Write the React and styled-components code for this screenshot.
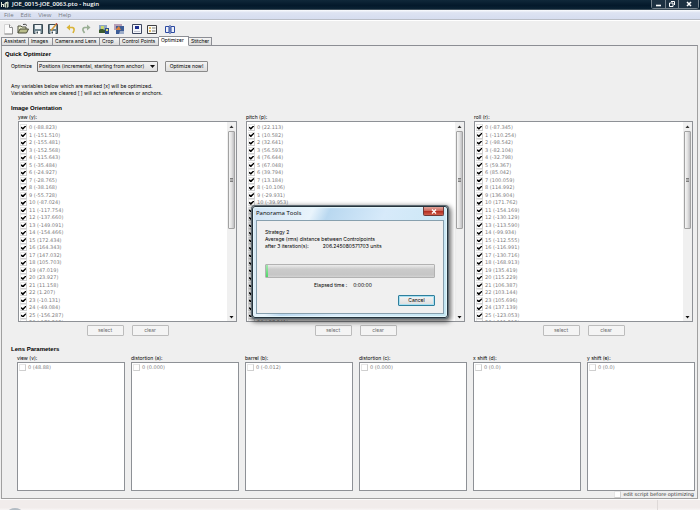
import React from 'react';

import styled, { createGlobalStyle, css } from 'styled-components';

const GlobalStyle = createGlobalStyle`
    * {
        box-sizing: border-box;
    }
    body {
        margin: 0;
        background: #efefef;
        color: #000;
        font-family: Inter, Tahoma, sans-serif;
        font-size: 5px;
        line-height: 7px;
    }
    button, input, select {
        font: inherit;
        color: inherit;
        margin: 0;
    }
    h1, h2, p {
        margin: 0;
        font-size: inherit;
    }
`;

const WindowStyle = styled.div`
    display: flex;
    flex-direction: column;
    min-height: 100vh;
`;

const TitleBar = styled.header`
    display: flex;
    align-items: center;
    gap: 3px;
    height: 10px;
    padding-left: 1px;
    background: linear-gradient(#10283a, #04192b 60%, #0a2234);
    border-bottom: 1px solid #3c4c58;
    color: #fff;
    h1 {
        flex: 1;
        font-family: 'Open Sans', sans-serif;
        font-size: 6px;
        font-weight: 600;
    }
`;

const WindowControls = styled.div`
    display: flex;
    align-self: flex-start;
    height: 9px;
    margin-right: 1px;
    border: 1px solid #75828c;
    border-top: 0;
    border-radius: 0 0 3px 3px;
`;

const WindowButton = styled.button`
    display: grid;
    place-items: center;
    width: ${(props) => (props.$wide ? '20px' : '13px')};
    padding: 0;
    border: 0;
    background: #1d3142;
    & + & {
        border-left: 1px solid #75828c;
    }
`;

const MenuBar = styled.nav`
    display: flex;
    gap: 7px;
    height: 10px;
    padding: 1px 4px 0;
    background: linear-gradient(#fbfcfe, #dde3f2 30%, #d6ddef);
    border-bottom: 1px solid #b9bdc6;
    font-family: 'Open Sans', sans-serif;
    font-size: 6px;
    button {
        padding: 0;
        border: 0;
        background: none;
        color: #777b84;
    }
`;

const ToolBar = styled.div`
    display: flex;
    gap: 6px;
    padding: 2px 2px 1px;
    border-top: 1px solid #fff;
`;

const ToolGroup = styled.div`
    display: flex;
    gap: 3px;
    button {
        display: block;
        width: 12px;
        height: 12px;
        padding: 0;
        border: 0;
        background: none;
    }
    svg {
        display: block;
    }
`;

const TabList = styled.div`
    display: flex;
    align-items: flex-end;
    height: 10px;
    padding-left: 1px;
    margin-bottom: -1px;
    z-index: 1;
`;

const Tab = styled.button`
    width: ${(props) => props.$width}px;
    height: 9px;
    padding: 0 0 0 2px;
    border: 1px solid #8c8e94;
    border-left-width: ${(props) => (props.$first ? '1px' : '0')};
    background: linear-gradient(#f4f4f4, #dcdcdc);
    text-align: left;
    white-space: nowrap;
    ${(props) => props.$active && css`
        height: 10px;
        padding-bottom: 1px;
        border-bottom-color: #fff;
        background: #fff;
    `}
`;

const Panel = styled.main`
    flex: 1;
    margin: 0 2px 0 1px;
    padding: 5px 0 0;
    border: 1px solid #a0a0a0;
    border-top-color: #8c8e94;
`;

const Heading = styled.h2`
    padding-left: ${(props) => (props.$outer ? '3px' : '9px')};
    margin-bottom: 2px;
    font-family: 'Liberation Sans', Arial, sans-serif;
    font-size: 6px;
    font-weight: bold;
`;

const OptimizeRow = styled.div`
    display: flex;
    align-items: center;
    gap: 7px;
    padding: 1px 0 0 9px;
    label {
        width: 19px;
        white-space: nowrap;
    }
`;

const SelectBox = styled.div`
    display: grid;
    align-items: center;
    width: 121px;
    height: 11px;
    border: 1px solid #707070;
    border-radius: 1px;
    background: linear-gradient(#f2f2f2, #dfdfdf);
    select, svg {
        grid-area: 1 / 1;
    }
    select {
        width: 100%;
        padding: 0 1px;
        border: 0;
        appearance: none;
        background: none;
    }
    svg {
        justify-self: end;
        margin-right: 2px;
        pointer-events: none;
    }
`;

const Button = styled.button`
    width: ${(props) => (props.$wide ? '43px' : '37px')};
    height: 11px;
    padding: 0;
    border: 1px solid #8a8a8a;
    border-radius: 1px;
    background: linear-gradient(#f4f4f4, #dddddd);
    white-space: nowrap;
    &:disabled {
        border-color: #bcbcbc;
        background: #f4f4f4;
        color: #6d6d6d;
    }
`;

const Note = styled.p`
    padding: 11px 9px 8px;
`;

const OrientationGrid = styled.div`
    display: grid;
    grid-template-columns: repeat(3, 1fr);
    gap: 9px;
    padding: 0 4px 0 16px;
    margin-bottom: 10px;
`;

const LensGrid = styled.div`
    display: grid;
    grid-template-columns: repeat(6, 1fr);
    gap: 6px;
    padding: 0 2px 0 15px;
`;

const VariableStyle = styled.section`
    .variable__label {
        height: 7px;
    }
    .variable__box {
        display: flex;
        height: ${(props) => (props.$tall ? '201px' : '129px')};
        border: 1px solid #8e9196;
        background: #fff;
        overflow: hidden;
    }
    .variable__actions {
        display: flex;
        justify-content: center;
        gap: 8px;
        padding-top: 3px;
    }
`;

const ItemList = styled.ul`
    display: grid;
    grid-auto-rows: 1fr;
    flex: 1;
    height: ${(props) => (props.$tall ? '203px' : '8px')};
    margin: ${(props) => (props.$tall ? '2px' : '1px')} 0 0;
    padding: 0 0 0 1px;
    list-style: none;
`;

const CheckLabel = styled.label`
    display: flex;
    align-items: center;
    gap: 2px;
    font-family: 'DejaVu Sans', Verdana, sans-serif;
    color: ${(props) => (props.$dark ? '#333' : '#808080')};
    white-space: nowrap;
    input {
        display: grid;
        place-items: center;
        width: 7px;
        height: 7px;
        border: 1px solid;
        border-color: #e6e6e6 #cfcfcf #cfcfcf #e6e6e6;
        background: #fff;
        appearance: none;
    }
    input:checked::before {
        content: '';
        width: 5px;
        height: 4px;
        background: #000;
        clip-path: polygon(0 40%, 15% 30%, 35% 55%, 85% 0, 100% 0, 100% 25%, 45% 100%, 28% 100%, 0 65%);
    }
`;

const ScrollBar = styled.div`
    display: flex;
    flex-direction: column;
    align-items: center;
    width: 9px;
    background: #f0f0f0;
    .thumb {
        display: grid;
        place-items: center;
        width: 7px;
        height: 98px;
        border: 1px solid #a2a2a2;
        border-radius: 1px;
        background: linear-gradient(90deg, #f6f6f6, #e2e2e2 50%, #bfbfc2);
    }
    .track {
        flex: 1;
    }
`;

const ScriptOption = styled.div`
    display: flex;
    justify-content: flex-end;
    padding-right: 3px;
`;

const StatusBar = styled.footer`
    display: flex;
    align-items: flex-end;
    justify-content: space-between;
    height: 12px;
    padding: 0 42px 0 8px;
    border-top: 1px solid #fbfbfb;
    background: linear-gradient(#f1eceb 70%, #fbf9f9);
    overflow: hidden;
    svg {
        display: block;
    }
    span {
        align-self: stretch;
        border-left: 1px solid #ded9d8;
    }
`;

const Overlay = styled.div`
    position: absolute;
    inset: 0;
    z-index: 2;
    display: flex;
    justify-content: center;
    align-items: flex-start;
    padding-top: 206px;
`;

const DialogStyle = styled.div`
    width: 196px;
    padding: 0 3px 3px;
    border: 1px solid #26333c;
    border-radius: 3px;
    background: linear-gradient(115deg, #cfe3f4, #e9f4fc 25%, #b9d8f0 32%, #d7eafa 55%, #c3e6f2);
    box-shadow: 0 0 0 1px #5f6c74, 1px 2px 5px 2px rgba(0, 0, 0, 0.6), inset 0 0 1px 1px #e6f8fc;
    .dialog__title {
        display: flex;
        justify-content: space-between;
        align-items: center;
        height: 13px;
        font-family: 'Open Sans', sans-serif;
        font-size: 6px;
    }
    .dialog__close {
        display: grid;
        place-items: center;
        align-self: flex-start;
        width: 21px;
        height: 9px;
        padding: 0;
        border: 1px solid #6d3a38;
        border-top: 0;
        border-radius: 0 0 2px 2px;
        background: linear-gradient(#e0a49b, #cd6a5e 45%, #b0281c 50%, #d0604c);
    }
    .dialog__body {
        padding: 8px 8px 7px;
        border: 1px solid #87a0ae;
        background: #f0f0f0;
    }
    .dialog__value {
        padding-left: 14px;
    }
    .dialog__elapsed {
        display: flex;
        justify-content: center;
        gap: 6px;
        padding: 4px 14px 6px 0;
    }
    .dialog__actions {
        display: flex;
        justify-content: flex-end;
    }
    .dialog__actions button {
        border-color: #2f7f9c;
        box-shadow: inset 0 0 0 1px #a8e0f2;
    }
`;

const Progress = styled.div`
    height: 14px;
    margin-top: 14px;
    border: 1px solid #b2b2b2;
    border-radius: 1px;
    background: linear-gradient(#ececec, #cbcbcb 35%, #c6c6c6 80%, #d2d2d2);
    div {
        height: 100%;
        background: linear-gradient(#a5e8b0, #4fd768);
    }
`;

const yaw = [
    '-88.823', '-151.510', '-155.481', '-152.568', '-115.643', '-35.484', '-24.927', '-28.765', '-38.168',
    '-55.728', '-87.024', '-117.754', '-137.660', '-149.091', '-154.466', '172.434', '164.343', '147.032',
    '105.703', '47.019', '23.927', '11.158', '1.207', '-10.131', '-49.084', '-156.287', '-170.292',
];

const pitch = [
    '22.113', '10.582', '32.641', '56.593', '76.644', '67.048', '39.794', '13.184', '-10.106',
    '-29.931', '-39.953', '-41.206', '-38.114', '-29.870', '-10.442', '10.310', '27.226', '47.915',
    '62.338', '66.120', '51.407', '29.516', '8.204', '-12.630', '-33.018', '-57.944', '-57.541',
];

const roll = [
    '-87.345', '-110.254', '-98.542', '-82.104', '-32.798', '59.367', '85.042', '100.059', '114.992',
    '136.904', '171.762', '-154.169', '-130.129', '-113.590', '-99.934', '-112.555', '-116.991', '-130.716',
    '-168.913', '135.419', '115.229', '106.387', '103.144', '105.696', '137.139', '-123.053', '-111.515',
];

const lens = [
    { label: 'view (v):', value: '48.88' },
    { label: 'distortion (a):', value: '0.000' },
    { label: 'barrel (b):', value: '-0.012' },
    { label: 'distortion (c):', value: '0.000' },
    { label: 'x shift (d):', value: '0.0' },
    { label: 'y shift (e):', value: '0.0' },
];

const tabs = [
    { name: 'Assistant', width: 28 },
    { name: 'Images', width: 24 },
    { name: 'Camera and Lens', width: 47 },
    { name: 'Crop', width: 20 },
    { name: 'Control Points', width: 39 },
    { name: 'Optimizer', width: 30, active: true },
    { name: 'Stitcher', width: 23 },
];

const floppy = (
    <>
        <path d="M1.5 1.5h9v9h-9z" fill="#6f858f" stroke="#3d4c55" />
        <path d="M3 2h6v4H3z" fill="#eef3f5" />
        <path d="M3.5 8h5v3h-5z" fill="#fff" />
        <path d="M4.5 8.5h1.5v2h-1.5z" fill="#3d4c55" />
    </>
);

const toolGroups = [
    [
        {
            name: 'New project',
            art: (
                <>
                    <path d="M2.5 1.5h5l3 3v6.5h-8z" fill="#fbfbfb" stroke="#d4d4d4" />
                    <path d="M7.5 1.5v3h3v6.5h-8" fill="none" stroke="#8a8a8a" />
                </>
            ),
        },
        {
            name: 'Open project',
            art: (
                <>
                    <path d="M1 10V3h3l1 1h4v2" fill="#e9ecc8" stroke="#4c4f3c" />
                    <path d="M1 10l2-4h8.5l-2 4z" fill="#b9bd8a" stroke="#4c4f3c" />
                    <path d="M6 1.5q2.5-1 4 1" fill="none" stroke="#444" />
                </>
            ),
        },
        { name: 'Save project', art: floppy },
        {
            name: 'Save project as',
            art: (
                <>
                    {floppy}
                    <path d="M4 7.5L9.5 1" stroke="#d89a3c" strokeWidth="1.6" />
                    <path d="M9 1.5l1-1" stroke="#a33" strokeWidth="1.5" />
                </>
            ),
        },
    ],
    [
        {
            name: 'Undo',
            art: (
                <>
                    <path d="M4 4.5h3.5q2 .5 1.5 3L8 10" fill="none" stroke="#d9b437" strokeWidth="1.6" />
                    <path d="M5 1.5v6L1.5 4.5z" fill="#d9b437" />
                </>
            ),
        },
        {
            name: 'Redo',
            art: (
                <>
                    <path d="M8 4.5H4.5q-2 .5-1.5 3L4.5 10" fill="none" stroke="#9aaf95" strokeWidth="1.6" />
                    <path d="M7 1.5v6l3.5-3z" fill="#9aaf95" />
                </>
            ),
        },
    ],
    [
        {
            name: 'Add images',
            art: (
                <>
                    <path d="M1 2h8v7H1z" fill="#8fa6c4" />
                    <path d="M1 7l3-2 2 2 2-1 1 1v3H1z" fill="#3b5a2e" />
                    <path d="M3 3h3v3H3z" fill="#cbd86a" />
                    <path d="M7 5h4v6H7z" fill="#2f4f8f" />
                    <path d="M8 6h2v2H8z" fill="#e0df6a" />
                </>
            ),
        },
        {
            name: 'Add time series',
            art: (
                <>
                    <path d="M1 1h8v6H1z" fill="#b9a1b8" />
                    <path d="M3 3h8v8H3z" fill="#3d5d97" />
                    <path d="M3 6l3-3 2 4H3z" fill="#d9813d" />
                    <path d="M7 8h4v3H6z" fill="#9dadc9" />
                </>
            ),
        },
    ],
    [
        {
            name: 'Preview',
            art: (
                <>
                    <path d="M1.5 1.5h9v9h-9z" fill="#f3f5fa" stroke="#3d4660" />
                    <path d="M4 3h4v3H4z" fill="#1c2f92" />
                    <path d="M3 8.5h6" stroke="#c3c6d2" />
                </>
            ),
        },
        {
            name: 'Control point list',
            art: (
                <>
                    <path d="M1.5 2.5h9v8h-9z" fill="#fbfbf6" stroke="#3f4046" />
                    <path d="M3 5h2M3 8h2" stroke="#d2a13a" strokeWidth="1.5" />
                    <path d="M6 5h3.5M6 8h3.5" stroke="#777" />
                </>
            ),
        },
    ],
    [
        {
            name: 'Fine tune',
            art: (
                <>
                    <path d="M1.5 3.5H5v6H1.5zM7 3.5h3.5v6H7z" fill="#eef1fb" stroke="#2b49a0" />
                    <path d="M6 2v9" stroke="#2b49a0" />
                </>
            ),
        },
    ],
];

function CheckItem(props) {
    const { text, checked, dark } = props;

    return (
        <CheckLabel $dark={dark}>
            <input type="checkbox" defaultChecked={checked} />
            {text}
        </CheckLabel>
    );
}

function Variable(props) {
    const { label, values, tall } = props;

    return (
        <VariableStyle $tall={tall}>
            <div className="variable__label">{label}</div>
            <div className="variable__box">
                <ItemList $tall={tall} aria-label={label}>
                    {values.map((value, index) => (
                        <li key={index}>
                            <CheckItem text={`${index} (${value})`} checked={tall} />
                        </li>
                    ))}
                </ItemList>
                {tall && (
                    <ScrollBar>
                        <svg width="7" height="9" viewBox="0 0 7 9">
                            <path d="M1.5 6l2-2.5 2 2.5z" fill="#333" />
                        </svg>
                        <div className="thumb">
                            <svg width="3" height="4" viewBox="0 0 3 4">
                                <path d="M0 .5h3M0 2h3M0 3.5h3" stroke="#666" strokeWidth="0.8" />
                            </svg>
                        </div>
                        <div className="track" />
                        <svg width="7" height="9" viewBox="0 0 7 9">
                            <path d="M1.5 4l2 2.5 2-2.5z" fill="#111" />
                        </svg>
                    </ScrollBar>
                )}
            </div>
            {tall && (
                <div className="variable__actions">
                    <Button disabled>select</Button>
                    <Button disabled>clear</Button>
                </div>
            )}
        </VariableStyle>
    );
}

function ProgressDialog() {
    return (
        <Overlay>
            <DialogStyle role="dialog" aria-label="Panorama Tools">
                <div className="dialog__title">
                    <span>Panorama Tools</span>
                    <button className="dialog__close" aria-label="Close">
                        <svg width="6" height="5" viewBox="0 0 6 5">
                            <path d="M1 .5l4 4M5 .5l-4 4" stroke="#fff" strokeWidth="1.3" />
                        </svg>
                    </button>
                </div>
                <div className="dialog__body">
                    <p>Strategy 2</p>
                    <p>Average (rms) distance between Controlpoints</p>
                    <p>
                        after 3 iteration(s):
                        <span className="dialog__value">206.245080571703 units</span>
                    </p>
                    <Progress>
                        <div style={{ width: '1%' }} />
                    </Progress>
                    <div className="dialog__elapsed">
                        <span>Elapsed time :</span>
                        <span>0:00:00</span>
                    </div>
                    <div className="dialog__actions">
                        <Button>Cancel</Button>
                    </div>
                </div>
            </DialogStyle>
        </Overlay>
    );
}

function App() {
    return (
        <WindowStyle>
            <GlobalStyle />
            <TitleBar>
                <svg width="8" height="8" viewBox="0 0 8 8">
                    <path d="M.5 1v5M2.5 3v3M.5 3.5h2M4 2l3-1v5H4z" stroke="#dfe6d8" fill="#9fb09a" />
                    <path d="M5.5 3v4" stroke="#3a4a44" />
                </svg>
                <h1>JOE_0015-JOE_0063.pto - hugin</h1>
                <WindowControls>
                    <WindowButton aria-label="Minimize">
                        <svg width="7" height="6" viewBox="0 0 7 6">
                            <path d="M1 4.5h5" stroke="#fff" strokeWidth="1.6" />
                        </svg>
                    </WindowButton>
                    <WindowButton aria-label="Restore">
                        <svg width="6" height="6" viewBox="0 0 6 6">
                            <path d="M2 .5h3.5v3.5M.5 2h3.5v3.5H.5z" stroke="#fff" fill="none" />
                        </svg>
                    </WindowButton>
                    <WindowButton $wide aria-label="Close">
                        <svg width="6" height="6" viewBox="0 0 6 6">
                            <path d="M1 1l4 4M5 1l-4 4" stroke="#fff" strokeWidth="1.5" />
                        </svg>
                    </WindowButton>
                </WindowControls>
            </TitleBar>
            <MenuBar>
                <button>File</button>
                <button>Edit</button>
                <button>View</button>
                <button>Help</button>
            </MenuBar>
            <ToolBar>
                {toolGroups.map((group, index) => (
                    <ToolGroup key={index}>
                        {group.map((tool) => (
                            <button key={tool.name} aria-label={tool.name}>
                                <svg width="12" height="12" viewBox="0 0 12 12">{tool.art}</svg>
                            </button>
                        ))}
                    </ToolGroup>
                ))}
            </ToolBar>
            <TabList role="tablist">
                {tabs.map((tab, index) => (
                    <Tab
                        key={tab.name}
                        role="tab"
                        aria-selected={Boolean(tab.active)}
                        $width={tab.width}
                        $active={tab.active}
                        $first={index === 0}
                    >
                        {tab.name}
                    </Tab>
                ))}
            </TabList>
            <Panel>
                <Heading $outer>Quick Optimizer</Heading>
                <OptimizeRow>
                    <label htmlFor="optimize">Optimize</label>
                    <SelectBox>
                        <select id="optimize">
                            <option>Positions (incremental, starting from anchor)</option>
                        </select>
                        <svg width="5" height="3" viewBox="0 0 5 3">
                            <path d="M0 0h5L2.5 3z" fill="#111" />
                        </svg>
                    </SelectBox>
                    <Button $wide>Optimize now!</Button>
                </OptimizeRow>
                <Note>
                    Any variables below which are marked [x] will be optimized.
                    <br />
                    Variables which are cleared [ ] will act as references or anchors.
                </Note>
                <Heading>Image Orientation</Heading>
                <OrientationGrid>
                    <Variable label="yaw (y):" values={yaw} tall />
                    <Variable label="pitch (p):" values={pitch} tall />
                    <Variable label="roll (r):" values={roll} tall />
                </OrientationGrid>
                <Heading>Lens Parameters</Heading>
                <LensGrid>
                    {lens.map((item) => (
                        <Variable key={item.label} label={item.label} values={[item.value]} />
                    ))}
                </LensGrid>
                <ScriptOption>
                    <CheckItem text="edit script before optimizing" dark />
                </ScriptOption>
            </Panel>
            <StatusBar>
                <svg width="14" height="3" viewBox="0 0 14 3">
                    <ellipse cx="7" cy="4" rx="7" ry="4" fill="#b3bcc4" />
                </svg>
                <span />
            </StatusBar>
            <ProgressDialog />
        </WindowStyle>
    );
}

export default App;
